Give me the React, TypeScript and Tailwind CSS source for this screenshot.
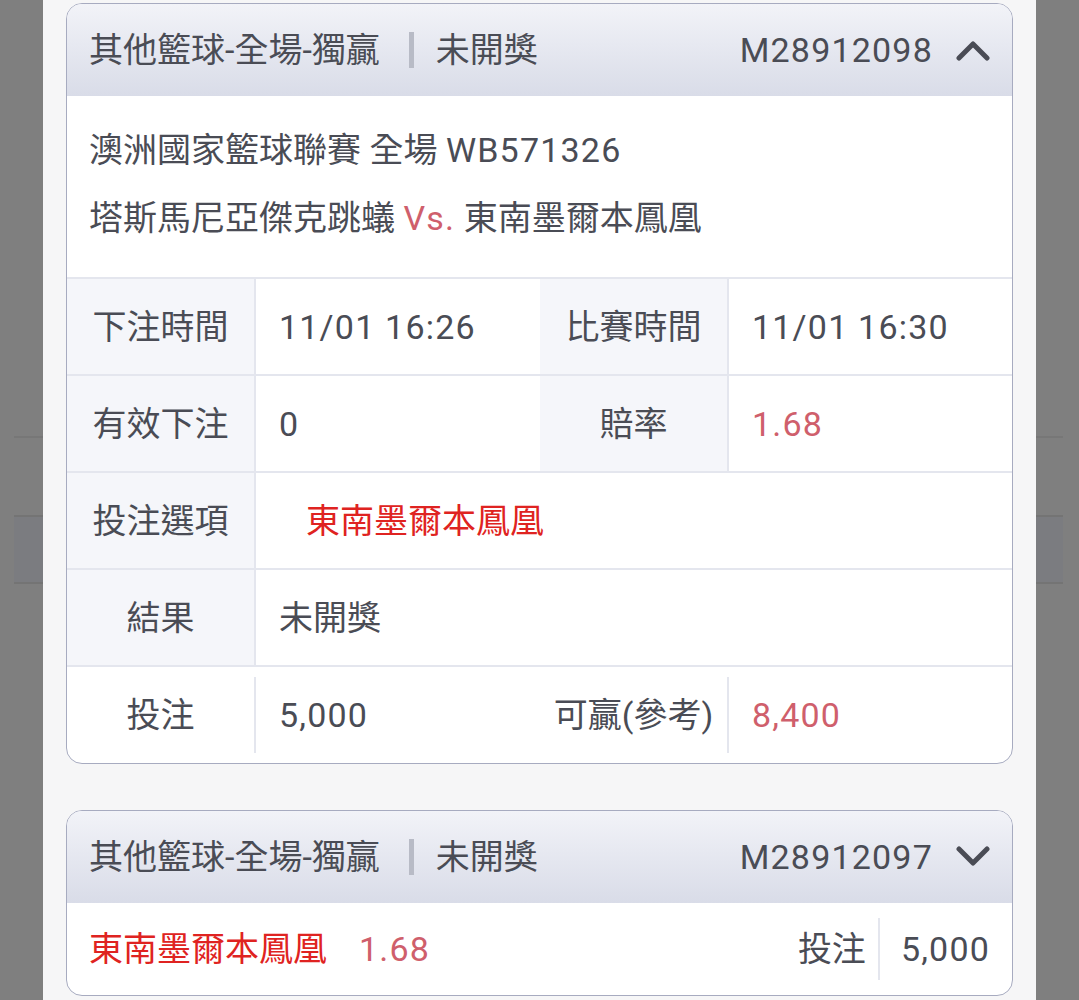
import React from "react";

const TEXT = "text-[#4a4c55]";
const PINK = "text-[#cf5f6c]";
const RED = "text-[#df2321]";

function L({ children, className = "" }: { children: React.ReactNode; className?: string }) {
  return <span className={`tracking-[1.2px] ${className}`}>{children}</span>;
}

function ChevronUp() {
  return (
    <svg width="34" height="22" viewBox="0 0 34 22" fill="none">
      <path d="M3 19 L17 5 L31 19" stroke="#4a4c55" strokeWidth="5" strokeLinecap="round" strokeLinejoin="round" />
    </svg>
  );
}

function ChevronDown() {
  return (
    <svg width="34" height="22" viewBox="0 0 34 22" fill="none">
      <path d="M3 3 L17 17 L31 3" stroke="#4a4c55" strokeWidth="5" strokeLinecap="round" strokeLinejoin="round" />
    </svg>
  );
}

function Header({ id, open }: { id: string; open: boolean }) {
  return (
    <div className={`flex h-[92px] items-center bg-gradient-to-b from-[#f2f3f8] to-[#d9dce8] pl-[22px] pr-[22px] ${TEXT}`}>
      <span>其他籃球-全場-獨贏</span>
      <span className="ml-[29px] h-[36px] w-[5px] bg-[#b8bbc6]" />
      <span className="ml-[22px]">未開獎</span>
      <L className="ml-auto">{id}</L>
      <span className="ml-[23px] flex items-center">{open ? <ChevronUp /> : <ChevronDown />}</span>
    </div>
  );
}

function Row({ children, className = "" }: { children: React.ReactNode; className?: string }) {
  return <div className={`flex h-[97px] border-t-2 border-[#e4e6ee] ${className}`}>{children}</div>;
}

function Label({ children, bg = true, w = "w-[187px]" }: { children: React.ReactNode; bg?: boolean; w?: string }) {
  return (
    <div className={`flex ${w} shrink-0 items-center justify-center ${bg ? "bg-[#f5f6fa]" : ""}`}>{children}</div>
  );
}

export default function App() {
  return (
    <div className={`flex h-[1000px] w-[1079px] overflow-hidden bg-[#7f7f7f] font-['Roboto','Noto_Sans_CJK_TC',sans-serif] text-[34px] leading-none ${TEXT}`}>
      {/* left dimmed background */}
      <div className="flex w-[43px] shrink-0 flex-col bg-[#7f7f7f]">
        <div className="h-[436px]" />
        <div className="ml-[14px] h-[2px] bg-[#777777]" />
        <div className="h-[77px]" />
        <div className="ml-[14px] h-[2px] bg-[#747474]" />
        <div className="ml-[14px] h-[65px] bg-[#7b7c80]" />
        <div className="ml-[14px] h-[2px] bg-[#747474]" />
      </div>

      {/* panel */}
      <div className="flex w-[993px] shrink-0 flex-col gap-[46px] bg-[#f6f6f7] px-[23px] pt-[3px]">
        {/* card 1 */}
        <div className="overflow-hidden rounded-[16px] border-[1.5px] border-[#a7abc0] bg-white">
          <Header id="M28912098" open />
          <div className="flex flex-col pb-[25px] pl-[22px] pt-[20px] leading-[68px]">
            <div>
              澳洲國家籃球聯賽 全場 <L>WB571326</L>
            </div>
            <div>
              塔斯馬尼亞傑克跳蟻 <L className={PINK}>Vs.</L> 東南墨爾本鳳凰
            </div>
          </div>
          <Row>
            <Label>下注時間</Label>
            <div className="flex w-[286px] shrink-0 items-center border-l-2 border-[#e4e6ee] pl-[23px]">
              <L>11/01 16:26</L>
            </div>
            <Label>比賽時間</Label>
            <div className="flex flex-1 items-center border-l-2 border-[#e4e6ee] pl-[23px]">
              <L>11/01 16:30</L>
            </div>
          </Row>
          <Row>
            <Label>有效下注</Label>
            <div className="flex w-[286px] shrink-0 items-center border-l-2 border-[#e4e6ee] pl-[23px]">
              <L>0</L>
            </div>
            <Label>賠率</Label>
            <div className={`flex flex-1 items-center border-l-2 border-[#e4e6ee] pl-[23px] ${PINK}`}>
              <L>1.68</L>
            </div>
          </Row>
          <Row>
            <Label>投注選項</Label>
            <div className={`flex flex-1 items-center border-l-2 border-[#e4e6ee] pl-[50px] ${RED}`}>東南墨爾本鳳凰</div>
          </Row>
          <Row>
            <Label>結果</Label>
            <div className="flex flex-1 items-center border-l-2 border-[#e4e6ee] pl-[23px]">未開獎</div>
          </Row>
          <Row className="h-[98px] items-center">
            <Label bg={false} w="w-[187px] self-stretch">投注</Label>
            <div className="h-[76px] w-[2px] bg-[#e4e6ee]" />
            <div className="flex w-[284px] shrink-0 items-center pl-[23px]">
              <L>5,000</L>
            </div>
            <Label bg={false} w="w-[187px] self-stretch">可贏(參考)</Label>
            <div className="h-[76px] w-[2px] bg-[#e4e6ee]" />
            <div className={`flex flex-1 items-center pl-[23px] ${PINK}`}>
              <L>8,400</L>
            </div>
          </Row>
        </div>

        {/* card 2 */}
        <div className="overflow-hidden rounded-[16px] border-[1.5px] border-[#a7abc0] bg-white">
          <Header id="M28912097" open={false} />
          <div className="flex h-[92px] items-center pl-[22px] pr-[22px]">
            <span className={RED}>東南墨爾本鳳凰</span>
            <L className={`ml-[32px] ${PINK}`}>1.68</L>
            <span className="ml-auto">投注</span>
            <span className="ml-[12px] h-[62px] w-[2px] bg-[#e4e6ee]" />
            <L className="ml-[21px]">5,000</L>
          </div>
        </div>
      </div>

      {/* right dimmed background */}
      <div className="flex flex-1 flex-col bg-[#7f7f7f]">
        <div className="h-[436px]" />
        <div className="mr-[16px] h-[2px] bg-[#777777]" />
        <div className="h-[77px]" />
        <div className="mr-[16px] h-[2px] bg-[#747474]" />
        <div className="mr-[16px] h-[65px] bg-[#7b7c80]" />
        <div className="mr-[16px] h-[2px] bg-[#747474]" />
      </div>
    </div>
  );
}
